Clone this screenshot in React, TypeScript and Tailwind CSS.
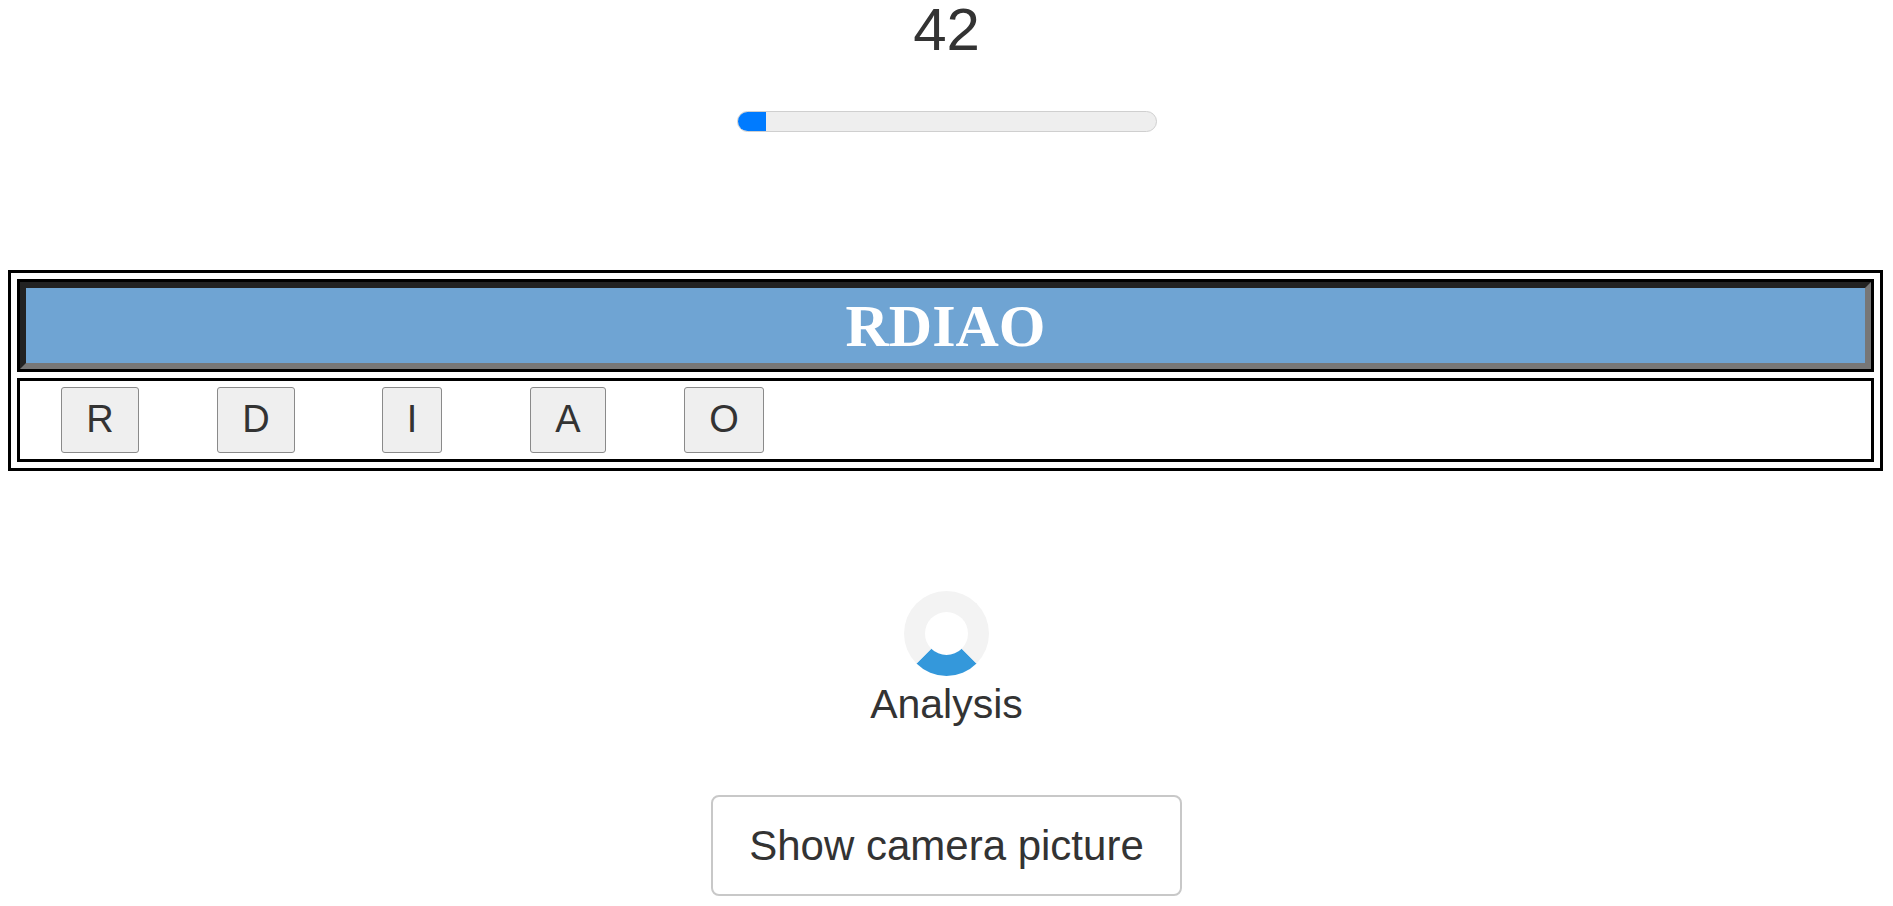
import type { ReactNode } from 'react'

const letters = ['R', 'D', 'I', 'A', 'O']

function LetterButton({ children }: { children: ReactNode }) {
  return (
    <div className="w-[156px] flex justify-center">
      <button className="px-6 py-[10px] text-[38px] leading-[1.149] text-[#333] bg-[#efefef] border border-[#8a8a8a] rounded-[3px]">
        {children}
      </button>
    </div>
  )
}

export default function App() {
  return (
    <div className="min-h-screen bg-white font-['Liberation_Sans',Arial,sans-serif] text-[#333]">
      {/* score + progress */}
      <div className="flex flex-col items-center">
        <div className="text-[60px] leading-none">42</div>
        <div className="mt-[51px] w-[420px] h-[21px] rounded-full bg-[#eeeeee] border border-[#cfcfcf] overflow-hidden">
          <div className="h-full w-[28px] bg-[#007bff]" />
        </div>
      </div>

      {/* word board */}
      <div className="mt-[138px] ml-2 mr-[10px] border-[3px] border-black p-[6px] flex flex-col gap-[6px]">
        <div className="border-[3px] border-black">
          <div className="border-[6px] border-t-[#222] border-l-[#222] border-b-[#777] border-r-[#777] bg-[#6fa4d3] h-[87px] flex items-center justify-center">
            <span className="font-['Liberation_Serif','Times_New_Roman',serif] font-bold text-[60px] leading-none text-white">
              RDIAO
            </span>
          </div>
        </div>
        <div className="border-[3px] border-black h-[84px] flex items-center pl-[2px]">
          {letters.map((l) => (
            <LetterButton key={l}>{l}</LetterButton>
          ))}
        </div>
      </div>

      {/* analysis spinner */}
      <div className="mt-[120px] flex flex-col items-center">
        <div className="w-[85px] h-[85px] rounded-full border-[21px] border-[#f3f3f3] border-b-[#3498db]" />
        <div className="mt-[5px] text-[41px] leading-[1.149]">Analysis</div>
      </div>

      <div className="mt-[67px] flex justify-center">
        <button className="h-[101px] px-[36px] text-[42px] text-[#333] bg-white border-2 border-[#c8c8c8] rounded-[8px]">
          Show camera picture
        </button>
      </div>
    </div>
  )
}
